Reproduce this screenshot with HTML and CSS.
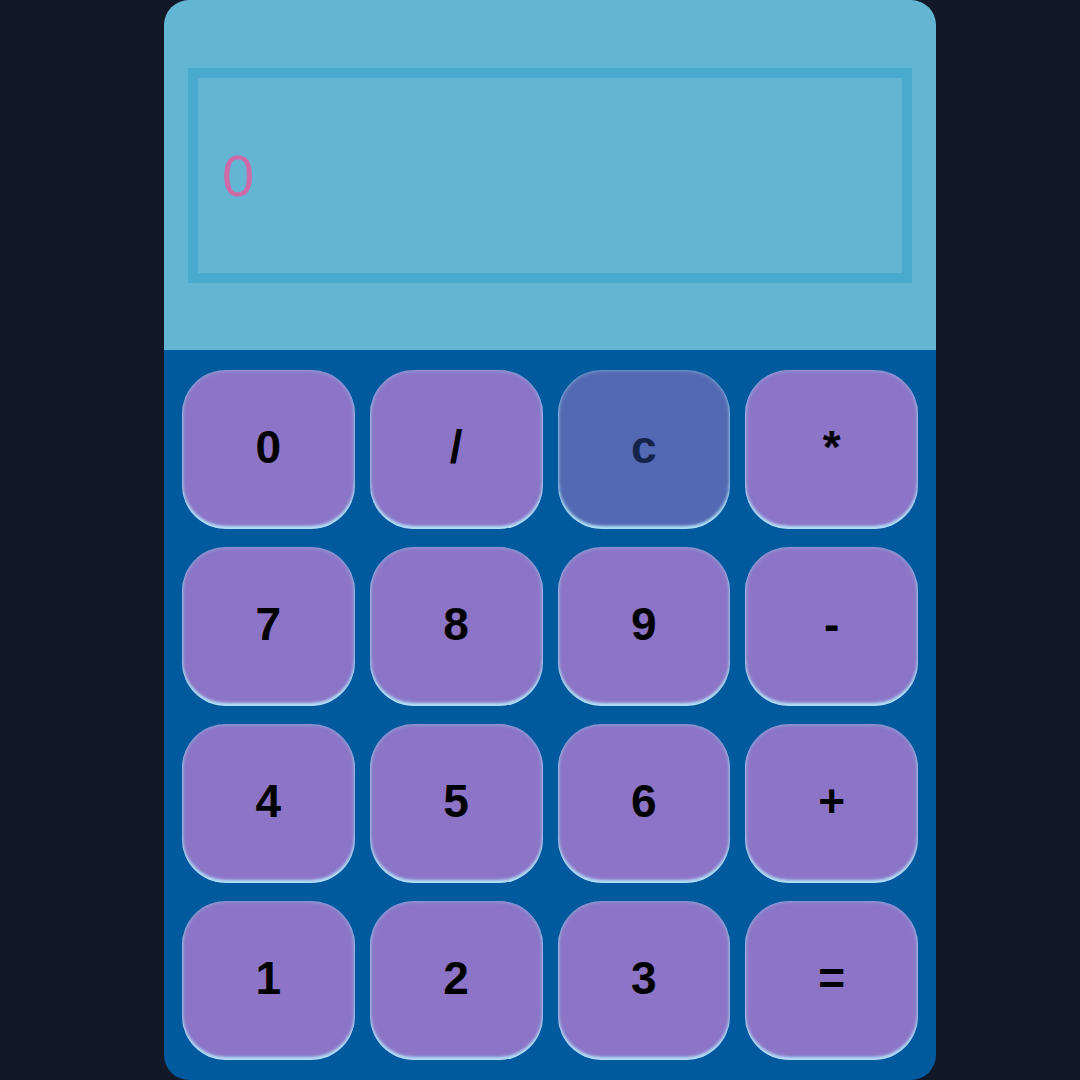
FILE: index.html
```html
<!DOCTYPE html>
<html>
<head>
<meta charset="utf-8">
<link rel="stylesheet" href="styles.css">
</head>
<body>
<div class="calc">
  <div class="top">
    <div class="display"><span class="value">0</span></div>
  </div>
  <div class="keys">
    <button class="key">0</button>
    <button class="key">/</button>
    <button class="key clear">c</button>
    <button class="key">*</button>
    <button class="key">7</button>
    <button class="key">8</button>
    <button class="key">9</button>
    <button class="key">-</button>
    <button class="key">4</button>
    <button class="key">5</button>
    <button class="key">6</button>
    <button class="key">+</button>
    <button class="key">1</button>
    <button class="key">2</button>
    <button class="key">3</button>
    <button class="key">=</button>
  </div>
</div>
</body>
</html>
```
FILE: styles.css
```css
html, body {
  margin: 0;
  padding: 0;
  height: 1080px;
  overflow: hidden;
  background: #131828;
}
.calc {
  margin-left: 164px;
  width: 772px;
  height: 1080px;
  border-radius: 25px;
  overflow: hidden;
  display: flex;
  flex-direction: column;
  font-family: "Liberation Sans", Arial, sans-serif;
}
.top {
  height: 350px;
  background: #62b5d3;
  padding: 68px 24px 0 24px;
  box-sizing: border-box;
}
.display {
  height: 215px;
  border: 10px solid #4aaacd;
  box-sizing: border-box;
  display: flex;
  align-items: center;
  padding-left: 24px;
}
.value {
  color: #cf6aa8;
  font-size: 58px;
  line-height: 1;
}
.keys {
  flex: 1;
  background: #01599e;
  padding: 20px 18px 0 18px;
  display: grid;
  grid-template-columns: repeat(4, 1fr);
  grid-auto-rows: 159px;
  column-gap: 15px;
  row-gap: 18px;
}
.key {
  border: none;
  border-radius: 44px;
  background: #8c75c7;
  font-family: "Liberation Sans", Arial, sans-serif;
  font-weight: bold;
  font-size: 46px;
  color: #000;
  box-shadow: inset 0 -3px 3px rgba(180, 230, 250, 0.95), inset 0 0 4px rgba(150, 215, 240, 0.7);
  padding: 0 0 5px 0;
}
.key.clear {
  background: #5469b3;
  color: #14234a;
}
```
